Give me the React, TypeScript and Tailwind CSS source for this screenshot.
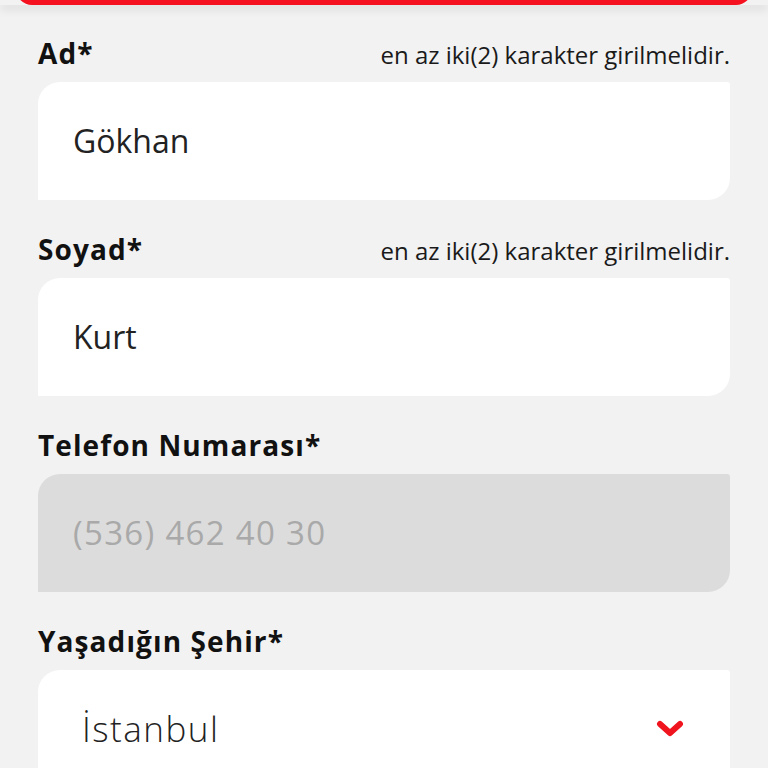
import React from "react";

function Label({ text, hint }: { text: string; hint?: boolean }) {
  return (
    <div className="flex items-end justify-between h-[30px]">
      <span className="font-['Open_Sans',sans-serif] font-bold text-[28px] leading-[30px] tracking-[1.1px] text-[#111]">{text}</span>
      {hint && (
        <span className="font-['Open_Sans',sans-serif] text-[24px] leading-[27px] text-[#1a1a1a]">
          en az iki(2) karakter girilmelidir.
        </span>
      )}
    </div>
  );
}

function Field({ value, disabled }: { value: string; disabled?: boolean }) {
  return (
    <div
      className={`mt-[14px] h-[118px] rounded-tl-[22px] rounded-tr-[3px] rounded-br-[22px] flex items-center pl-[35px] font-['Open_Sans',sans-serif] ${
        disabled ? "bg-[#dcdcdc] text-[#a9a9a9] text-[33px] tracking-[1.3px]" : "bg-white text-[#222] text-[32px]"
      }`}
    >
      {value}
    </div>
  );
}

export default function App() {
  return (
    <div className="w-[768px] h-[768px] overflow-hidden bg-[#f2f2f2]">
      <div className="px-[16px] h-[5px] overflow-hidden shadow-[0_4px_10px_rgba(0,0,0,0.12)]">
        <div className="-mt-[25px] h-[30px] bg-[#f5111f] rounded-b-[16px]" />
      </div>
      <div className="pl-[38px] pr-[38px] pt-[33px]">
        <Label text="Ad*" hint />
        <Field value="Gökhan" />
        <div className="mt-[34px]">
          <Label text="Soyad*" hint />
          <Field value="Kurt" />
        </div>
        <div className="mt-[34px]">
          <Label text="Telefon Numarası*" />
          <Field value="(536) 462 40 30" disabled />
        </div>
        <div className="mt-[34px]">
          <Label text="Yaşadığın Şehir*" />
          <div className="mt-[14px] h-[118px] bg-white rounded-tl-[22px] rounded-tr-[3px] rounded-br-[22px] flex items-center justify-between pl-[44px] pr-[46px] font-['Open_Sans',sans-serif] font-light text-[35px] tracking-[1.5px] text-[#222]">
            <span>İstanbul</span>
            <svg width="28" height="22" viewBox="0 0 28 22">
              <polyline points="4,6 14,15 24,6" fill="none" stroke="#f0141e" strokeWidth="6" strokeLinecap="round" strokeLinejoin="round" />
            </svg>
          </div>
        </div>
      </div>
    </div>
  );
}
